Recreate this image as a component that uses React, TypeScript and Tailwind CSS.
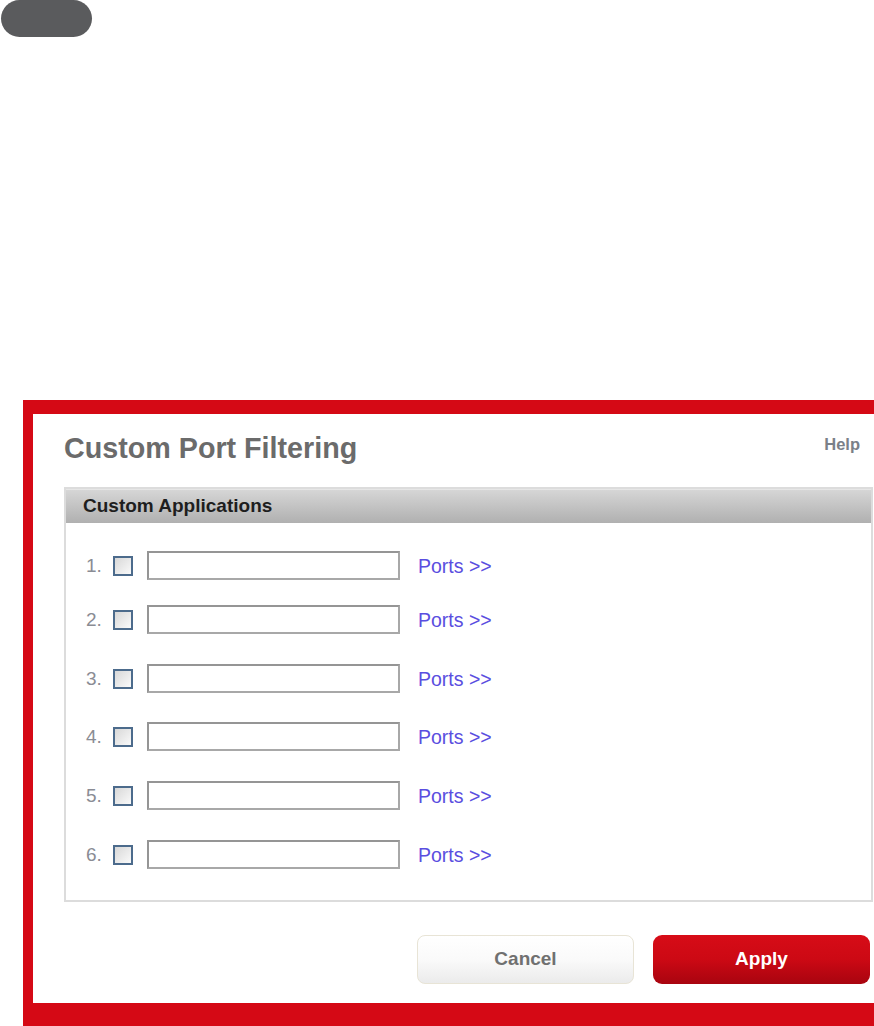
import React from "react";

const rowMargins = ["", "mt-[25px]", "mt-[30px]", "mt-[29px]", "mt-[30px]", "mt-[30px]"];

export default function App() {
  return (
    <div
      className="w-[874px] h-[1026px] bg-white overflow-hidden"
      style={{ fontFamily: '"Liberation Sans", Arial, Helvetica, sans-serif' }}
    >
      <div className="ml-[1px] w-[91px] h-[37px] rounded-full bg-[#5a5b5d]" />
      <div className="mt-[363px] ml-[23px] w-[851px] border-l-[10px] border-t-[14px] border-b-[23px] border-[#d50915] bg-white">
        <div className="pl-[31px] pr-[14px] pt-[18px] pb-[19px]">
          <div className="flex items-start justify-between">
            <h1 className="text-[28.7px] leading-[32px] font-bold text-[#6b6b6b]">
              Custom Port Filtering
            </h1>
            <a className="mt-[2px] text-[16.5px] leading-[20px] font-bold text-[#7a8088]">Help</a>
          </div>
          <div className="mt-[23px] mr-[-13px] border-2 border-[#dcdcdc]">
            <div className="h-[34px] flex items-center pl-[17px] bg-gradient-to-b from-[#d6d6d6] to-[#b0b0b0] border-t border-[#e6e6e6]">
              <span className="text-[19px] font-bold text-[#1e1e1e]">Custom Applications</span>
            </div>
            <div className="pt-[28px] pb-[31px] pl-[20px]">
              {[1, 2, 3, 4, 5, 6].map((n, i) => (
                <div key={n} className={`flex items-center h-[29px] ${rowMargins[i]}`}>
                  <span className="w-[15px] text-[19px] leading-[22px] text-[#8a8c94]">{n}.</span>
                  <span className="ml-[12px] w-[20px] h-[20px] border-2 border-[#4c6b8c] bg-gradient-to-br from-[#d8d8d8] to-[#fafafa]" />
                  <span className="ml-[14px] w-[253px] h-[29px] border-2 border-[#959595] border-r-[#a8a8a8] border-b-[#a8a8a8] bg-white" />
                  <a className="ml-[18px] text-[19.5px] leading-[22px] text-[#5a4ee0]">Ports &gt;&gt;</a>
                </div>
              ))}
            </div>
          </div>
          <div className="mt-[33px] mr-[-10px] flex justify-end gap-[19px]">
            <button className="w-[217px] h-[49px] rounded-[8px] border border-[#e8e4d6] bg-gradient-to-b from-white via-[#fafafa] to-[#ebebeb] text-[19px] font-bold text-[#707070]">
              Cancel
            </button>
            <button className="w-[217px] h-[49px] rounded-[9px] bg-gradient-to-b from-[#d70c17] via-[#cc0914] to-[#a8040f] text-[19px] font-bold text-white">
              Apply
            </button>
          </div>
        </div>
      </div>
    </div>
  );
}
